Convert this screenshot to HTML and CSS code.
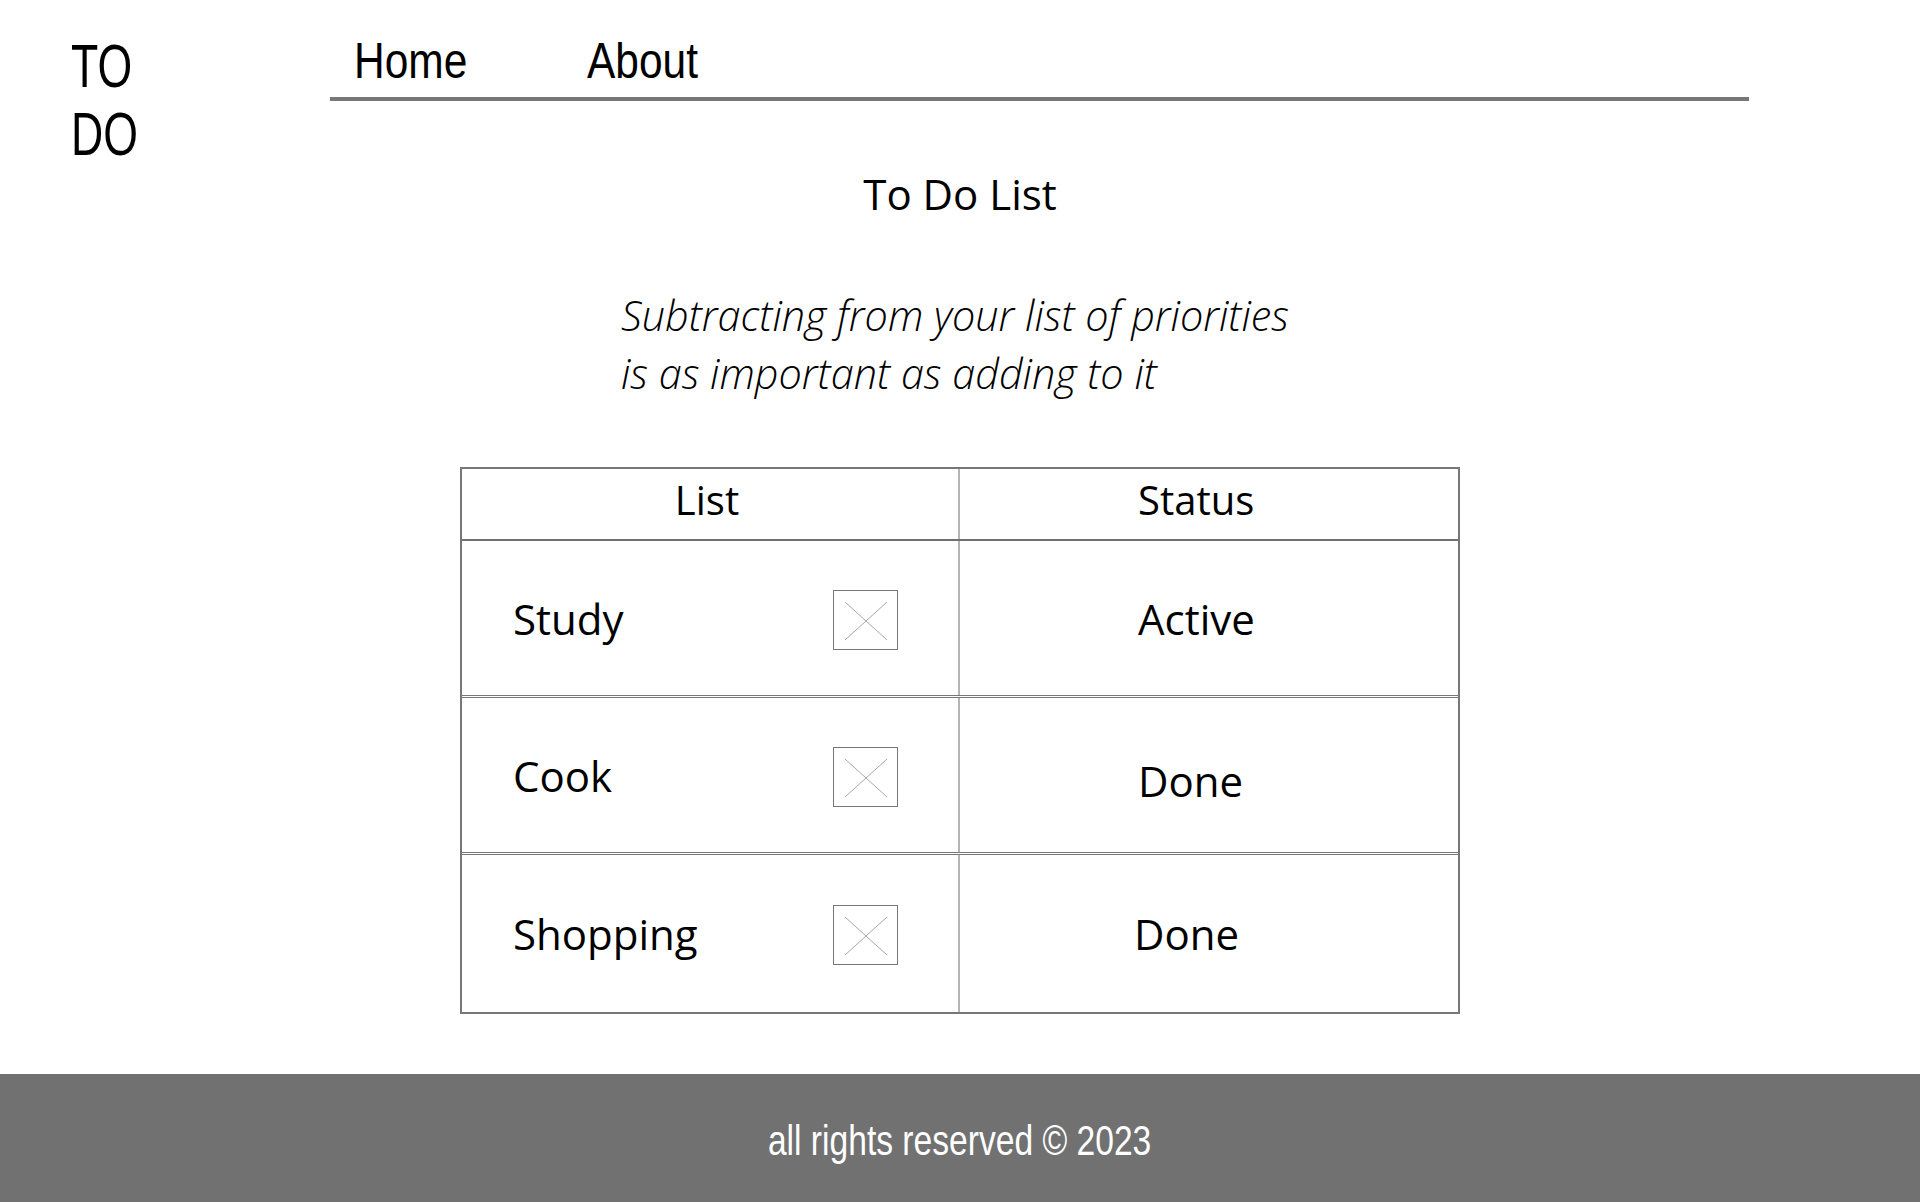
FILE: index.html
```html
<!DOCTYPE html>
<html lang="en">
<head>
<meta charset="utf-8">
<title>To Do</title>
<link rel="stylesheet" href="styles.css">
</head>
<body>
<header class="site-header">
  <div class="logo"><span class="logo-text">TO<br>DO</span></div>
  <nav class="main-nav">
    <a class="nav-link" href="#"><span class="nav-text">Home</span></a>
    <a class="nav-link" href="#"><span class="nav-text">About</span></a>
  </nav>
</header>
<main class="content">
  <h1 class="page-title">To Do List</h1>
  <p class="quote">Subtracting from your list of priorities<br>is as important as adding to it</p>
  <div class="todo-table">
    <div class="row head">
      <div class="cell list-col head-list">List</div>
      <div class="cell status-col">Status</div>
    </div>
    <div class="row item sep">
      <div class="cell list-col"><span class="task">Study</span><span class="box"><svg viewBox="0 0 63 58" width="63" height="58"><line x1="11" y1="11" x2="53" y2="49"/><line x1="53" y1="11" x2="11" y2="49"/></svg></span></div>
      <div class="cell status-col">Active</div>
    </div>
    <div class="row item sep">
      <div class="cell list-col"><span class="task">Cook</span><span class="box"><svg viewBox="0 0 63 58" width="63" height="58"><line x1="11" y1="11" x2="53" y2="49"/><line x1="53" y1="11" x2="11" y2="49"/></svg></span></div>
      <div class="cell status-col status-low">Done</div>
    </div>
    <div class="row item">
      <div class="cell list-col"><span class="task">Shopping</span><span class="box"><svg viewBox="0 0 63 58" width="63" height="58"><line x1="11" y1="11" x2="53" y2="49"/><line x1="53" y1="11" x2="11" y2="49"/></svg></span></div>
      <div class="cell status-col status-left">Done</div>
    </div>
  </div>
</main>
<footer class="site-footer">
  <span class="footer-text">all rights reserved © 2023</span>
</footer>
</body>
</html>
```
FILE: styles.css
```css
html, body {
  margin: 0;
  padding: 0;
  background: #ffffff;
  color: #000000;
}
body {
  width: 1920px;
  height: 1202px;
  overflow: hidden;
  display: flex;
  flex-direction: column;
  font-family: "Open Sans", "Noto Sans", sans-serif;
}
.site-header {
  display: flex;
  align-items: flex-start;
  padding-left: 71px;
  height: 169px;
  flex-shrink: 0;
}
.logo {
  width: 259px;
  margin-top: 32px;
  font-family: "Liberation Sans", Arial, sans-serif;
  font-size: 62px;
  line-height: 68px;
}
.logo-text {
  display: inline-block;
  transform: scaleX(0.72);
  transform-origin: left center;
}
.main-nav {
  width: 1419px;
  margin-top: 37px;
  padding-bottom: 11px;
  border-bottom: 4px solid #777777;
  display: flex;
  padding-left: 24px;
  box-sizing: border-box;
}
.nav-link {
  font-family: "Liberation Sans", Arial, sans-serif;
  font-size: 50px;
  line-height: 49px;
  color: #000;
  text-decoration: none;
  width: 233px;
}
.nav-text {
  display: inline-block;
  transform: scaleX(0.85);
  transform-origin: left center;
}
.content {
  flex: 1;
  display: flex;
  flex-direction: column;
  align-items: center;
}
.page-title {
  margin: 0;
  font-weight: 400;
  font-size: 42px;
  line-height: 50px;
}
.quote {
  margin: 67px 0 0;
  padding-right: 10px;
  font-style: italic;
  font-weight: 300;
  font-size: 41.4px;
  line-height: 58px;
  text-align: left;
}
.todo-table {
  margin-top: 65px;
  width: 1000px;
  border: 2px solid #777777;
  box-sizing: border-box;
}
.row {
  display: grid;
  grid-template-columns: 498px 498px;
}
.head {
  height: 72px;
  border-bottom: 2px solid #707070;
  box-sizing: border-box;
}
.head .cell {
  font-size: 40px;
  padding-bottom: 9px;
}
.item {
  height: 157px;
  box-sizing: border-box;
}
.sep {
  border-bottom: 3px double #777777;
}
.cell {
  display: flex;
  align-items: center;
  font-size: 42px;
}
.list-col {
  border-right: 2px solid #b4b4b4;
  padding-left: 51px;
  padding-right: 60px;
  justify-content: space-between;
}
.head .head-list {
  justify-content: center;
  padding-left: 0;
  padding-right: 6px;
}
.status-col {
  padding-left: 178px;
}
.status-low {
  padding-top: 10px;
}
.status-left {
  padding-left: 174px;
}
.box {
  width: 63px;
  height: 58px;
  border: 1px solid #777777;
  display: block;
  margin-top: 3px;
}
.box svg {
  display: block;
}
.box line {
  stroke: #a8a8a8;
  stroke-width: 1;
}
.site-footer {
  height: 128px;
  background: #717171;
  display: flex;
  align-items: center;
  justify-content: center;
  flex-shrink: 0;
}
.footer-text {
  display: inline-block;
  color: #ffffff;
  font-family: "Liberation Sans", Arial, sans-serif;
  font-size: 42px;
  padding-top: 6px;
  transform: scaleX(0.8);
}
```
